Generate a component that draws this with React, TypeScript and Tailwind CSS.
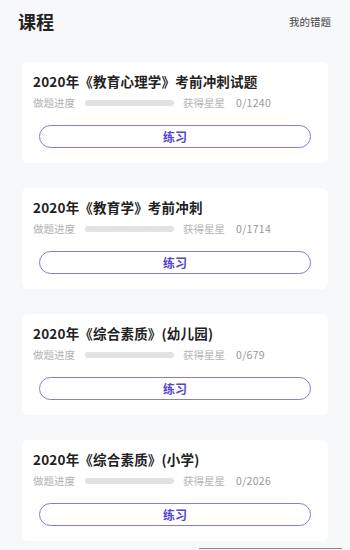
const courses = [
  { title: "2020年《教育心理学》考前冲刺试题", total: 1240 },
  { title: "2020年《教育学》考前冲刺", total: 1714 },
  { title: "2020年《综合素质》(幼儿园)", total: 679 },
  { title: "2020年《综合素质》(小学)", total: 2026 },
];

const font = { fontFamily: '"Noto Sans CJK SC", "Noto Sans", sans-serif' };

function CourseCard({ title, total }: { title: string; total: number }) {
  return (
    <div className="bg-white rounded-md h-[101px] pl-[11px] pr-[17px] pt-[9px]">
      <div className="text-[13.5px] font-bold text-[#222] leading-[20px] tracking-[0.2px]">{title}</div>
      <div className="flex items-center mt-[2px] h-[20px] text-[10.5px] text-[#b3b3b3]">
        <span className="w-[52px]">做题进度</span>
        <div className="w-[89px] h-[6px] rounded-full bg-[#e2e2e2]" />
        <span className="ml-[9px] w-[53px]">获得星星</span>
        <span className="text-[#999] tracking-[0.3px]">0/{total}</span>
      </div>
      <button className="mt-[12px] ml-[6px] w-[272px] h-[23px] rounded-full border-[1.5px] border-[#857bd8] text-[#5247cc] text-[12px] font-bold flex items-center justify-center">
        练习
      </button>
    </div>
  );
}

export default function App() {
  return (
    <div style={font} className="w-[350px] h-[550px] bg-[#f7f8fa] overflow-hidden">
      <div className="flex items-center justify-between pl-[18px] pr-[19px] h-[42px]">
        <h1 className="text-[18px] font-bold text-[#222]">课程</h1>
        <span className="text-[10.5px] text-[#444] mt-[1px]">我的错题</span>
      </div>
      <div className="flex flex-col gap-[25px] px-[22px] pt-[20px]">
        {courses.map((c) => (
          <CourseCard key={c.title} title={c.title} total={c.total} />
        ))}
      </div>
      <div className="ml-[199px] mt-[7px] w-[143px] h-px bg-[#888]" />
    </div>
  );
}
